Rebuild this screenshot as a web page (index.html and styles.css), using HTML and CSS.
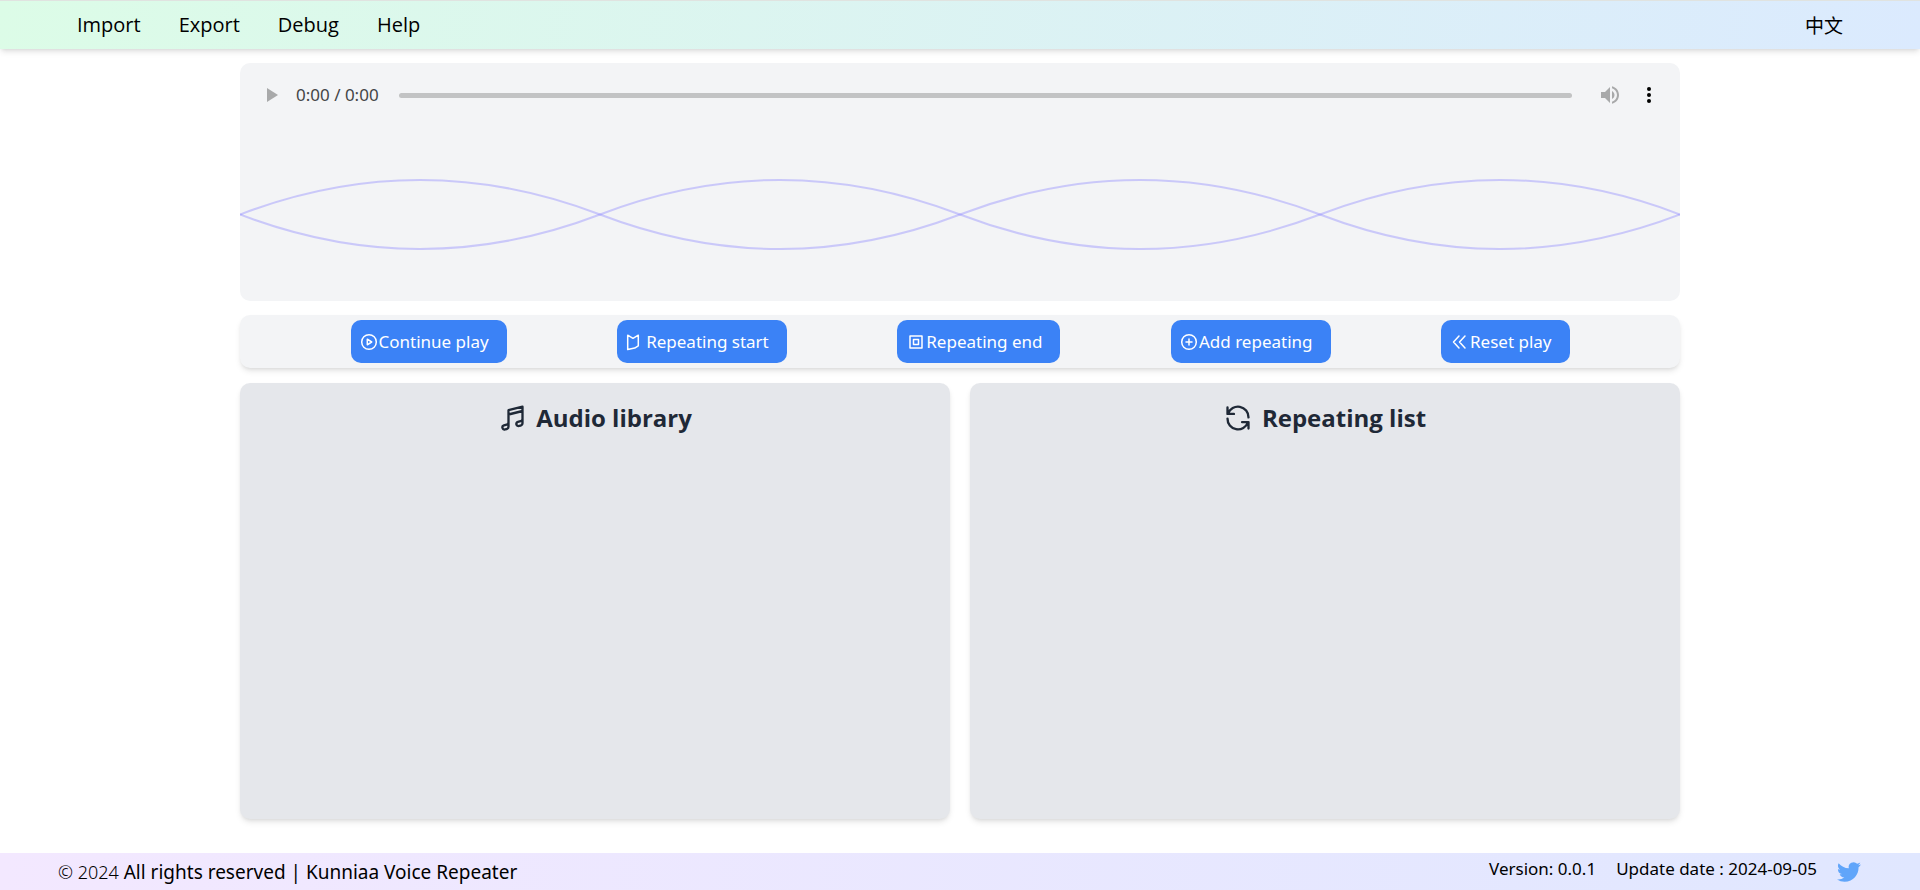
FILE: index.html
```html
<!DOCTYPE html>
<html lang="en">
<head>
<meta charset="utf-8">
<meta name="viewport" content="width=device-width, initial-scale=1">
<title>Kunniaa Voice Repeater</title>
<link rel="stylesheet" href="styles.css">
</head>
<body>
<header class="topbar">
  <nav class="menu" aria-label="Main">
    <button type="button" class="menu-item">Import</button>
    <button type="button" class="menu-item">Export</button>
    <button type="button" class="menu-item">Debug</button>
    <button type="button" class="menu-item">Help</button>
  </nav>
  <button type="button" class="menu-item language" lang="zh">中文</button>
</header>

<main class="content">
  <section class="player" aria-label="Player">
    <div class="transport">
      <button type="button" class="transport-button play" aria-label="Play" disabled>
        <svg viewBox="0 0 24 24" width="24" height="24" fill="currentColor"><path d="M8 5v14l11-7z"/></svg>
      </button>
      <span class="time">0:00 / 0:00</span>
      <input class="seek" type="range" min="0" max="100" value="0" aria-label="Seek" disabled>
      <button type="button" class="transport-button volume" aria-label="Mute" disabled>
        <svg viewBox="0 0 24 24" width="24" height="24" fill="currentColor"><path d="M3 9v6h4l5 5V4L7 9H3zm13.500 3c0-1.770-1.020-3.290-2.500-4.030v8.050c1.480-.73 2.500-2.250 2.500-4.020zM14 3.230v2.060c2.890.86 5 3.540 5 6.710s-2.110 5.850-5 6.710v2.060c4.010-.91 7-4.490 7-8.770s-2.990-7.860-7-8.770z"/></svg>
      </button>
      <button type="button" class="transport-button more" aria-label="More options">
        <svg viewBox="0 0 24 24" width="24" height="24" fill="currentColor"><circle cx="12" cy="6" r="2"/><circle cx="12" cy="12" r="2"/><circle cx="12" cy="18" r="2"/></svg>
      </button>
    </div>
    <svg class="wave" viewBox="0 0 1440 72" preserveAspectRatio="none" aria-hidden="true">
      <path d="M0 36.500Q180-32.500 360 36.500T720 36.500T1080 36.500T1440 36.500"/>
      <path d="M0 36.500Q180 105.500 360 36.500T720 36.500T1080 36.500T1440 36.500"/>
    </svg>
  </section>

  <section class="actions" aria-label="Repeat controls">
    <button type="button" class="action">
      <svg viewBox="0 0 18 18" width="18" height="18"><circle cx="9" cy="9" r="7.300"/><path d="M7.300 6.200v5.600l4.400-2.800z"/></svg>Continue play
    </button>
    <button type="button" class="action spaced">
      <svg viewBox="0 0 18 18" width="18" height="18"><path d="M1.700 2.200L7 5.300l5.300-3.100v10.600l-3.600 2.300-7 1.400z"/></svg>Repeating start
    </button>
    <button type="button" class="action inset">
      <svg viewBox="0 0 18 18" width="18" height="18"><path d="M3 3h12v12H3zM6.500 6.500h5v5h-5z"/></svg>Repeating end
    </button>
    <button type="button" class="action">
      <svg viewBox="0 0 18 18" width="18" height="18"><circle cx="9" cy="9" r="7.300"/><path d="M9 6v6M6 9h6"/></svg>Add repeating
    </button>
    <button type="button" class="action spaced">
      <svg viewBox="0 0 18 18" width="18" height="18"><path d="M9 3L3.500 9l5.500 6M15 3L9.500 9l5.500 6"/></svg>Reset play
    </button>
  </section>

  <div class="lists">
    <section class="list">
      <h2 class="list-title">
        <svg viewBox="0 0 24 24" width="28" height="28"><path d="M9 9l12-3m0 6.553v3.750a2.250 2.250 0 01-1.632 2.163l-1.320.377a1.803 1.803 0 11-.99-3.467l2.310-.66a2.250 2.250 0 001.632-2.163zm0 0V2.250L9 5.250v10.303m0 0v3.750a2.250 2.250 0 01-1.632 2.163l-1.320.377a1.803 1.803 0 01-.99-3.467l2.310-.66A2.250 2.250 0 009 15.553z"/></svg>Audio library
      </h2>
    </section>
    <section class="list">
      <h2 class="list-title">
        <svg viewBox="0 0 24 24" width="28" height="28"><path d="M3 3v5.500h5.500M3.500 8.300A9 9 0 0 1 21 11.500M21 21v-5.500h-5.500M20.500 15.700A9 9 0 0 1 3 12.500"/></svg>Repeating list
      </h2>
    </section>
  </div>
</main>

<footer class="footer">
  <p class="copyright"><span class="year">© 2024</span> All rights reserved | Kunniaa Voice Repeater</p>
  <div class="release">
    <span>Version: 0.0.1</span>
    <span>Update date : 2024-09-05</span>
    <a class="twitter" href="#" aria-label="Twitter">
      <svg viewBox="0 0 24 24" width="24" height="24" fill="currentColor"><path d="M23.950 4.570a10 10 0 01-2.820.770 4.960 4.960 0 002.160-2.720c-.95.550-2 .950-3.130 1.180a4.920 4.920 0 00-8.380 4.480C7.690 8.090 4.070 6.130 1.640 3.160a4.820 4.820 0 00-.67 2.480c0 1.710.870 3.210 2.190 4.100a4.900 4.900 0 01-2.230-.620v.060a4.920 4.920 0 003.950 4.830 5 5 0 01-2.210.080 4.940 4.940 0 004.600 3.420A9.870 9.870 0 010 19.540a13.990 13.990 0 007.560 2.210c9.050 0 14-7.500 14-13.980 0-.210 0-.420-.020-.630a9.940 9.940 0 002.410-2.570z"/></svg>
    </a>
  </div>
</footer>
</body>
</html>
```
FILE: styles.css
```css
* {
  box-sizing: border-box;
}

body {
  display: flex;
  flex-direction: column;
  min-height: 100vh;
  margin: 0;
  background: #fff;
  color: #000;
  font-family: "Noto Sans", "Noto Sans CJK SC", sans-serif;
  font-size: 17px;
  line-height: 28px;
}

button {
  padding: 0;
  border: 0;
  background: none;
  color: inherit;
  font: inherit;
  white-space: nowrap;
}

svg {
  display: block;
  flex: none;
}

.topbar {
  display: flex;
  align-items: center;
  justify-content: space-between;
  padding: 10px 77px;
  border-top: 1px solid #e0e3e0;
  background: linear-gradient(100deg, #dcfce7, #dbeafe);
  box-shadow: 0 4px 6px -1px rgb(0 0 0 / 0.1), 0 2px 4px -2px rgb(0 0 0 / 0.1);
}

.menu {
  display: flex;
  gap: 38px;
}

.menu-item {
  font-family: "Open Sans", "Noto Sans", sans-serif;
  font-size: 20px;
}

.language {
  font-family: "Noto Sans CJK SC", sans-serif;
  font-size: 19px;
}

.content {
  display: flex;
  flex: 1;
  flex-direction: column;
  gap: 14px;
  width: 75%;
  margin: 14px auto 34px;
}

.player {
  padding-bottom: 51px;
  border-radius: 10px;
  background: #f3f4f6;
}

.transport {
  display: flex;
  align-items: center;
  padding: 20px 19px;
}

.transport-button {
  display: flex;
}

.play,
.volume {
  color: #a8a9aa;
}

.time {
  margin: 0 20px 0 13px;
  color: #444546;
  line-height: 24px;
}

.seek {
  flex: 1;
  height: 5px;
  margin: 0 26px 0 0;
  border-radius: 3px;
  appearance: none;
  background: #c2c3c4;
}

.seek::-webkit-slider-thumb {
  width: 0;
  height: 0;
  appearance: none;
}

.more {
  margin-left: 15px;
}

.wave {
  width: 100%;
  height: 72px;
  margin-top: 51px;
  fill: none;
  stroke: #8b87ff;
  stroke-opacity: 0.4;
  stroke-width: 2;
}

.actions {
  display: flex;
  justify-content: space-evenly;
  padding: 5px 0;
  border-radius: 10px;
  background: #f3f4f6;
  box-shadow: 0 4px 6px -1px rgb(0 0 0 / 0.1), 0 2px 4px -2px rgb(0 0 0 / 0.1);
}

.action {
  display: flex;
  gap: 1px;
  align-items: center;
  height: 43px;
  padding: 0 18px 0 9px;
  border-radius: 10px;
  background: #3b82f6;
  color: #fff;
}

.action svg,
.list-title svg {
  fill: none;
  stroke: currentColor;
  stroke-width: 1.5;
  stroke-linecap: round;
  stroke-linejoin: round;
}

.action.spaced {
  gap: 2px;
}

.action.inset {
  padding-left: 10px;
}

.lists {
  display: grid;
  flex: 1;
  grid-template-columns: 1fr 1fr;
  gap: 20px;
  margin-top: 1px;
}

.list {
  padding: 20px;
  border-radius: 10px;
  background: #e5e7eb;
  box-shadow: 0 4px 6px -1px rgb(0 0 0 / 0.1), 0 2px 4px -2px rgb(0 0 0 / 0.1);
}

.list-title {
  display: flex;
  align-items: center;
  justify-content: center;
  gap: 10px;
  margin: 0;
  color: #1f2937;
  font-family: "Open Sans", "Noto Sans", sans-serif;
  font-size: 24px;
  font-weight: 700;
  line-height: 30px;
}

.list-title svg {
  stroke-width: 2;
}

.footer {
  display: flex;
  align-items: center;
  justify-content: space-between;
  height: 37px;
  padding: 0 59px 0 58px;
  background: linear-gradient(to right, #f3e8ff, #e0e7ff);
}

.copyright {
  margin: 0;
  font-size: 19px;
}

.year {
  font-size: 18px;
  font-weight: 300;
}

.release {
  display: flex;
  align-items: center;
  gap: 20px;
}

.release span {
  padding-bottom: 6px;
}

.twitter {
  color: #60a5fa;
}
```
